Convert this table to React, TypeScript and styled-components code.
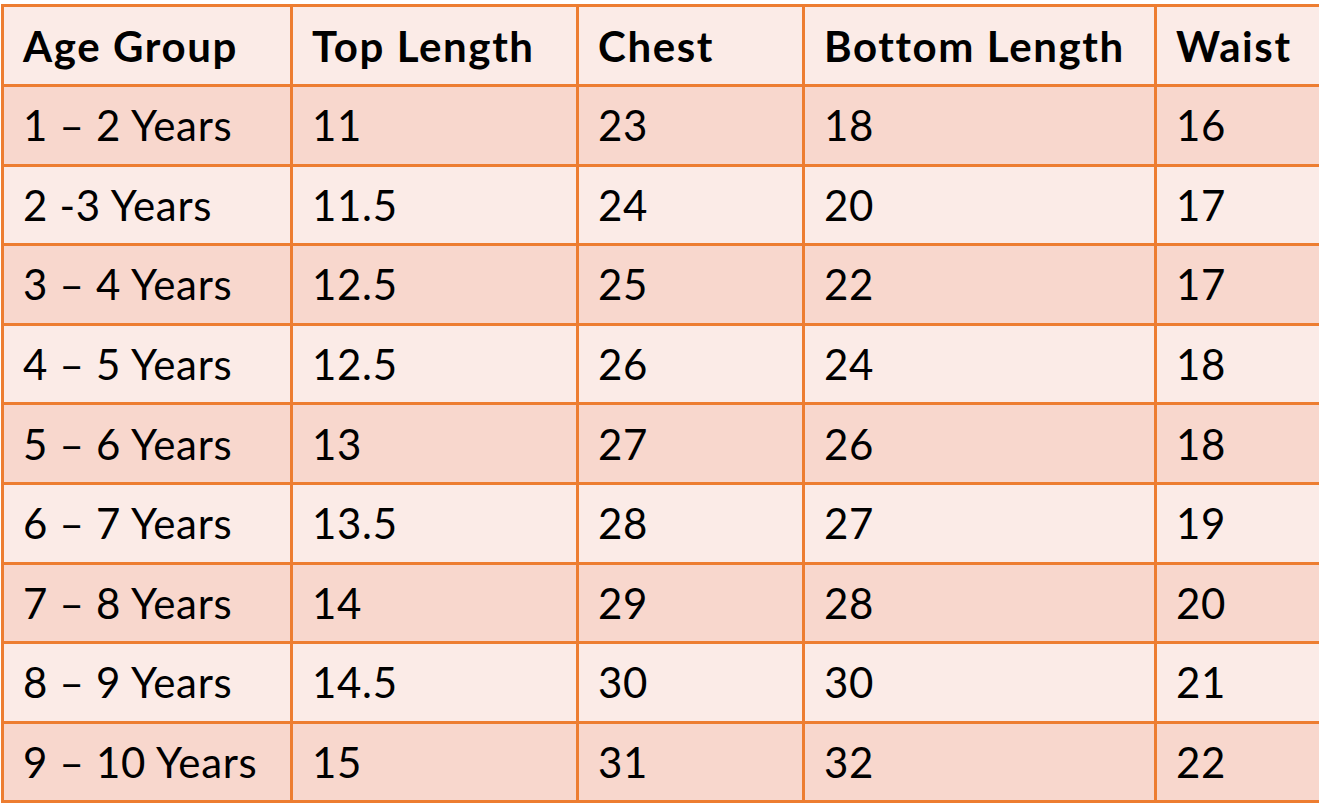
import React from 'react'
import styled, { createGlobalStyle } from 'styled-components'

const GlobalStyle = createGlobalStyle`
    html, body {
        margin: 0;
        padding: 0;
        background: #ffffff;
        overflow: hidden;
    }
`

const Table = styled.table`
    border-collapse: collapse;
    table-layout: fixed;
    width: 1380px;
    margin: 4px 0 0 1px;
    font-family: Lato, "Liberation Sans", sans-serif;
    color: #000000;
`

const Row = styled.tr<{ $dark?: boolean; $head?: boolean }>`
    height: ${p => (p.$head ? '80px' : '79.6px')};
    background: ${p => (p.$dark ? '#f8d7cd' : '#fbebe7')};
`

const HeadCell = styled.th`
    border: 3px solid #ed7d31;
    padding: 0 0 0 19px;
    text-align: left;
    font-size: 42px;
    font-weight: 700;
    letter-spacing: 1.6px;
    white-space: nowrap;
`

const Cell = styled.td`
    border: 3px solid #ed7d31;
    padding: 0 0 0 19px;
    font-size: 42px;
    font-weight: 400;
    letter-spacing: 0.7px;
    white-space: nowrap;
`

const columns = [
    { title: 'Age Group', width: 289 },
    { title: 'Top Length', width: 286 },
    { title: 'Chest', width: 226 },
    { title: 'Bottom Length', width: 352 },
    { title: 'Waist', width: 227 },
]

const rows = [
    ['1 – 2 Years', '11', '23', '18', '16'],
    ['2 -3 Years', '11.5', '24', '20', '17'],
    ['3 – 4 Years', '12.5', '25', '22', '17'],
    ['4 – 5 Years', '12.5', '26', '24', '18'],
    ['5 – 6 Years', '13', '27', '26', '18'],
    ['6 – 7 Years', '13.5', '28', '27', '19'],
    ['7 – 8 Years', '14', '29', '28', '20'],
    ['8 – 9 Years', '14.5', '30', '30', '21'],
    ['9 – 10 Years', '15', '31', '32', '22'],
]

const App: React.FC = () => {
    return <>
        <GlobalStyle />
        <Table>
            <colgroup>
                {columns.map(c => <col key={c.title} style={{ width: c.width }} />)}
            </colgroup>
            <thead>
                <Row $head>
                    {columns.map(c => <HeadCell key={c.title}>{c.title}</HeadCell>)}
                </Row>
            </thead>
            <tbody>
                {rows.map((r, i) =>
                    <Row key={r[0]} $dark={i % 2 === 0}>
                        {r.map((v, j) => <Cell key={j}>{v}</Cell>)}
                    </Row>
                )}
            </tbody>
        </Table>
    </>
}

export default App
